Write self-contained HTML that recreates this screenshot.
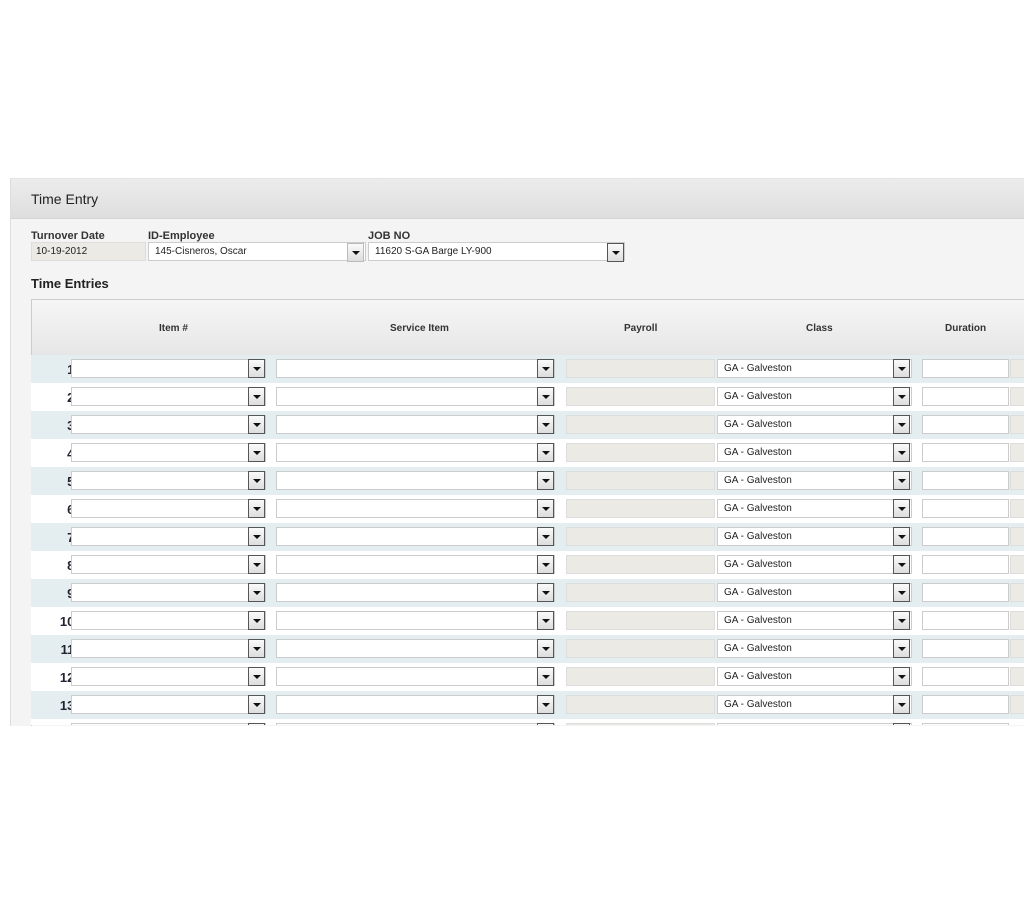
<!DOCTYPE html>
<html><head><style>
body{margin:0;width:1024px;height:900px;background:#fff;position:relative;overflow:hidden;font-family:"Liberation Sans",Arial,sans-serif}
.panel{position:absolute;left:10px;top:178px;width:1014px;height:547px;background:#f4f4f4;border-left:1px solid #ddd;border-top:1px solid #e4e4e4;overflow:hidden}
.hd{position:absolute;left:0;top:0;width:1014px;height:39px;background:linear-gradient(#ececec,#dedede);border-bottom:1px solid #d4d4d4}
.hd span{position:absolute;left:20px;top:12px;font-size:14px;color:#222}
.lb{position:absolute;font-size:11px;font-weight:bold;color:#333}
.fld{position:absolute;height:17px;border:1px solid #ccc;background:#fff;font-size:10px;line-height:17px;padding-left:6px;box-sizing:border-box;height:19px;color:#222}
.tbl{position:absolute;left:20px;top:120px;width:1000px;height:430px;border-left:1px solid #ccc;border-top:1px solid #ccc}
.th{position:absolute;left:0;top:0;width:1000px;height:56px;background:linear-gradient(#f6f6f6,#e6e6e6);border-bottom:1px solid #d0d0d0}
.th span{position:absolute;top:23px;font-size:10px;font-weight:bold;color:#333}
.r{position:absolute;left:0;width:1000px;height:28px}
.o{background:#e4eef0}.e{background:#fff}
.n{position:absolute;right:953px;top:7px;font-size:13px;font-weight:bold;color:#223}
.i{position:absolute;top:4px;height:19px;box-sizing:border-box;border:1px solid #ccc;background:#fff;font-size:10px;line-height:17px;padding-left:6px;color:#222}
.g{background:#ebeae4;border-color:#ddd}
.b{position:absolute;top:4px;width:17px;height:19px;box-sizing:border-box;border:1px solid #555;background:linear-gradient(#fafafa,#ddd)}
.b:after{content:"";position:absolute;left:4px;top:7px;border-left:4px solid transparent;border-right:4px solid transparent;border-top:4px solid #111}
</style></head><body>
<div class="panel">
<div class="hd"><span>Time Entry</span></div>
<div class="lb" style="left:20px;top:51px">Turnover Date</div>
<div class="lb" style="left:137px;top:51px">ID-Employee</div>
<div class="lb" style="left:357px;top:51px">JOB NO</div>
<div class="fld" style="left:20px;top:63px;width:115px;background:#ebeae4;border-color:#ddd;padding-left:4px">10-19-2012</div>
<div class="fld" style="left:137px;top:63px;width:218px">145-Cisneros, Oscar</div>
<div class="b" style="left:336px;top:64px;border-color:#bbb"></div>
<div class="fld" style="left:357px;top:63px;width:257px">11620 S-GA Barge LY-900</div>
<div class="b" style="left:596px;top:64px"></div>
<div class="lb" style="left:20px;top:97px;font-size:13px;font-weight:bold;color:#222">Time Entries</div>
<div class="tbl">
<div class="th"><span style="left:127px">Item #</span><span style="left:358px">Service Item</span><span style="left:592px">Payroll</span><span style="left:774px">Class</span><span style="left:913px">Duration</span></div>
</div>
</div>
<div style="position:absolute;left:31px;top:355px;width:993px;height:370px;overflow:hidden">
<div class="r o" style="top:0"><span class="n">1.</span><div class="i" style="left:40px;width:195px"></div><div class="b" style="left:217px"></div><div class="i" style="left:245px;width:279px"></div><div class="b" style="left:506px"></div><div class="i g" style="left:535px;width:149px"></div><div class="i" style="left:686px;width:195px">GA - Galveston</div><div class="b" style="left:862px"></div><div class="i" style="left:891px;width:87px"></div><div class="i g" style="left:979px;width:30px"></div></div>
<div class="r e" style="top:28px"><span class="n">2.</span><div class="i" style="left:40px;width:195px"></div><div class="b" style="left:217px"></div><div class="i" style="left:245px;width:279px"></div><div class="b" style="left:506px"></div><div class="i g" style="left:535px;width:149px"></div><div class="i" style="left:686px;width:195px">GA - Galveston</div><div class="b" style="left:862px"></div><div class="i" style="left:891px;width:87px"></div><div class="i g" style="left:979px;width:30px"></div></div>
<div class="r o" style="top:56px"><span class="n">3.</span><div class="i" style="left:40px;width:195px"></div><div class="b" style="left:217px"></div><div class="i" style="left:245px;width:279px"></div><div class="b" style="left:506px"></div><div class="i g" style="left:535px;width:149px"></div><div class="i" style="left:686px;width:195px">GA - Galveston</div><div class="b" style="left:862px"></div><div class="i" style="left:891px;width:87px"></div><div class="i g" style="left:979px;width:30px"></div></div>
<div class="r e" style="top:84px"><span class="n">4.</span><div class="i" style="left:40px;width:195px"></div><div class="b" style="left:217px"></div><div class="i" style="left:245px;width:279px"></div><div class="b" style="left:506px"></div><div class="i g" style="left:535px;width:149px"></div><div class="i" style="left:686px;width:195px">GA - Galveston</div><div class="b" style="left:862px"></div><div class="i" style="left:891px;width:87px"></div><div class="i g" style="left:979px;width:30px"></div></div>
<div class="r o" style="top:112px"><span class="n">5.</span><div class="i" style="left:40px;width:195px"></div><div class="b" style="left:217px"></div><div class="i" style="left:245px;width:279px"></div><div class="b" style="left:506px"></div><div class="i g" style="left:535px;width:149px"></div><div class="i" style="left:686px;width:195px">GA - Galveston</div><div class="b" style="left:862px"></div><div class="i" style="left:891px;width:87px"></div><div class="i g" style="left:979px;width:30px"></div></div>
<div class="r e" style="top:140px"><span class="n">6.</span><div class="i" style="left:40px;width:195px"></div><div class="b" style="left:217px"></div><div class="i" style="left:245px;width:279px"></div><div class="b" style="left:506px"></div><div class="i g" style="left:535px;width:149px"></div><div class="i" style="left:686px;width:195px">GA - Galveston</div><div class="b" style="left:862px"></div><div class="i" style="left:891px;width:87px"></div><div class="i g" style="left:979px;width:30px"></div></div>
<div class="r o" style="top:168px"><span class="n">7.</span><div class="i" style="left:40px;width:195px"></div><div class="b" style="left:217px"></div><div class="i" style="left:245px;width:279px"></div><div class="b" style="left:506px"></div><div class="i g" style="left:535px;width:149px"></div><div class="i" style="left:686px;width:195px">GA - Galveston</div><div class="b" style="left:862px"></div><div class="i" style="left:891px;width:87px"></div><div class="i g" style="left:979px;width:30px"></div></div>
<div class="r e" style="top:196px"><span class="n">8.</span><div class="i" style="left:40px;width:195px"></div><div class="b" style="left:217px"></div><div class="i" style="left:245px;width:279px"></div><div class="b" style="left:506px"></div><div class="i g" style="left:535px;width:149px"></div><div class="i" style="left:686px;width:195px">GA - Galveston</div><div class="b" style="left:862px"></div><div class="i" style="left:891px;width:87px"></div><div class="i g" style="left:979px;width:30px"></div></div>
<div class="r o" style="top:224px"><span class="n">9.</span><div class="i" style="left:40px;width:195px"></div><div class="b" style="left:217px"></div><div class="i" style="left:245px;width:279px"></div><div class="b" style="left:506px"></div><div class="i g" style="left:535px;width:149px"></div><div class="i" style="left:686px;width:195px">GA - Galveston</div><div class="b" style="left:862px"></div><div class="i" style="left:891px;width:87px"></div><div class="i g" style="left:979px;width:30px"></div></div>
<div class="r e" style="top:252px"><span class="n">10.</span><div class="i" style="left:40px;width:195px"></div><div class="b" style="left:217px"></div><div class="i" style="left:245px;width:279px"></div><div class="b" style="left:506px"></div><div class="i g" style="left:535px;width:149px"></div><div class="i" style="left:686px;width:195px">GA - Galveston</div><div class="b" style="left:862px"></div><div class="i" style="left:891px;width:87px"></div><div class="i g" style="left:979px;width:30px"></div></div>
<div class="r o" style="top:280px"><span class="n">11.</span><div class="i" style="left:40px;width:195px"></div><div class="b" style="left:217px"></div><div class="i" style="left:245px;width:279px"></div><div class="b" style="left:506px"></div><div class="i g" style="left:535px;width:149px"></div><div class="i" style="left:686px;width:195px">GA - Galveston</div><div class="b" style="left:862px"></div><div class="i" style="left:891px;width:87px"></div><div class="i g" style="left:979px;width:30px"></div></div>
<div class="r e" style="top:308px"><span class="n">12.</span><div class="i" style="left:40px;width:195px"></div><div class="b" style="left:217px"></div><div class="i" style="left:245px;width:279px"></div><div class="b" style="left:506px"></div><div class="i g" style="left:535px;width:149px"></div><div class="i" style="left:686px;width:195px">GA - Galveston</div><div class="b" style="left:862px"></div><div class="i" style="left:891px;width:87px"></div><div class="i g" style="left:979px;width:30px"></div></div>
<div class="r o" style="top:336px"><span class="n">13.</span><div class="i" style="left:40px;width:195px"></div><div class="b" style="left:217px"></div><div class="i" style="left:245px;width:279px"></div><div class="b" style="left:506px"></div><div class="i g" style="left:535px;width:149px"></div><div class="i" style="left:686px;width:195px">GA - Galveston</div><div class="b" style="left:862px"></div><div class="i" style="left:891px;width:87px"></div><div class="i g" style="left:979px;width:30px"></div></div>
<div class="r e" style="top:364px"><div class="i" style="left:40px;width:195px"></div><div class="b" style="left:217px"></div><div class="i" style="left:245px;width:279px"></div><div class="b" style="left:506px"></div><div class="i g" style="left:535px;width:149px"></div><div class="i" style="left:686px;width:195px"></div><div class="b" style="left:862px"></div><div class="i" style="left:891px;width:87px"></div></div>
</div>
</body></html>
